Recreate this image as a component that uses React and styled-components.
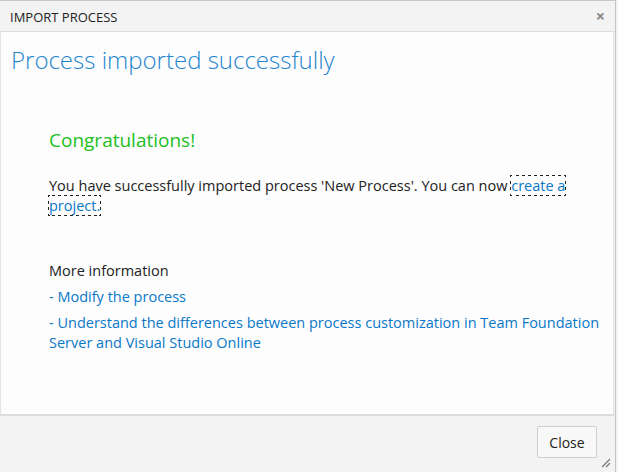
import React from "react";
import styled, { createGlobalStyle } from "styled-components";

const Global = createGlobalStyle`
  html, body { margin: 0; padding: 0; }
  body {
    background: #f3f3f3;
    font-family: "Open Sans", "Noto Sans", sans-serif;
    overflow: hidden;
  }
`;

function App() {
  return (
    <>
      <Global />
      <Dialog>
        <TitleBar>
          <Title>IMPORT PROCESS</Title>
          <CloseX>×</CloseX>
        </TitleBar>
        <Content>
          <Heading>Process imported successfully</Heading>
          <Section>
            <Congrats>Congratulations!</Congrats>
            <Body>
              You have successfully imported process 'New Process'. You can now{" "}
              <FocusLink href="#">create a project.</FocusLink>
            </Body>
            <MoreTitle>More information</MoreTitle>
            <LinkItem href="#">- Modify the process</LinkItem>
            <LinkItem href="#">
              - Understand the differences between process customization in Team Foundation Server and Visual Studio Online
            </LinkItem>
          </Section>
        </Content>
        <Footer>
          <Button>Close</Button>
          <Grip viewBox="0 0 12 12">
            <path d="M11 3 L3 11 M11 7 L7 11" stroke="#777" strokeWidth="1.2" />
          </Grip>
        </Footer>
      </Dialog>
    </>
  );
}

export default App;

// #####################################################################

const Dialog = styled.div`
  width: 615px;
  height: 471px;
  display: flex;
  flex-direction: column;
  border-top: 1px solid #c8c8c8;
  border-right: 1px solid #c4c4c4;
  background: #f3f3f3;
`;

const TitleBar = styled.div`
  height: 30px;
  display: flex;
  align-items: center;
  justify-content: space-between;
  padding: 0 10px;
  border-bottom: 1px solid #dcdcdc;
  background: #f3f3f3;
`;

const Title = styled.div`
  font-size: 13px;
  color: #222;
  margin-top: 2px;
`;

const CloseX = styled.div`
  font-size: 16px;
  font-weight: 700;
  color: #888;
  line-height: 1;
`;

// #####################################################################

const Content = styled.div`
  flex: 1;
  background: #fdfdfd;
  border-left: 1px solid #e2e2e2;
  border-right: 1px solid #e2e2e2;
  border-bottom: 2px solid #dcdcdc;
  margin-right: 1px;
  padding: 12px 9px 0 10px;
`;

const Heading = styled.h1`
  margin: 0;
  font-size: 24px;
  font-weight: 300;
  line-height: 32px;
  color: #1e85d0;
`;

const Section = styled.div`
  padding: 51px 0 0 38px;
`;

const Congrats = styled.div`
  font-size: 19px;
  font-weight: 400;
  line-height: 26px;
  color: #22c022;
  margin-bottom: 23px;
`;

const Body = styled.div`
  font-size: 14.5px;
  line-height: 20px;
  color: #222;
  margin-bottom: 45px;
`;

const FocusLink = styled.a`
  color: #0a78c8;
  text-decoration: none;
  outline: 1px dotted #222;
`;

const MoreTitle = styled.div`
  font-size: 14.5px;
  line-height: 20px;
  color: #222;
  margin-bottom: 6px;
`;

const LinkItem = styled.a`
  display: block;
  font-size: 14.5px;
  line-height: 20px;
  color: #0a78c8;
  text-decoration: none;
  margin-bottom: 6px;
`;

// #####################################################################

const Footer = styled.div`
  height: 56px;
  position: relative;
  display: flex;
  align-items: center;
  justify-content: flex-end;
  padding-right: 18px;
  background: #f3f3f3;
`;

const Button = styled.button`
  width: 60px;
  height: 32px;
  margin-top: -4px;
  background: #f8f8f8;
  border: 1px solid #cfcfcf;
  border-radius: 2px;
  font-family: "Open Sans", "Noto Sans", sans-serif;
  font-size: 14px;
  color: #222;
`;

const Grip = styled.svg`
  position: absolute;
  right: 4px;
  bottom: 4px;
  width: 12px;
  height: 12px;
`;
